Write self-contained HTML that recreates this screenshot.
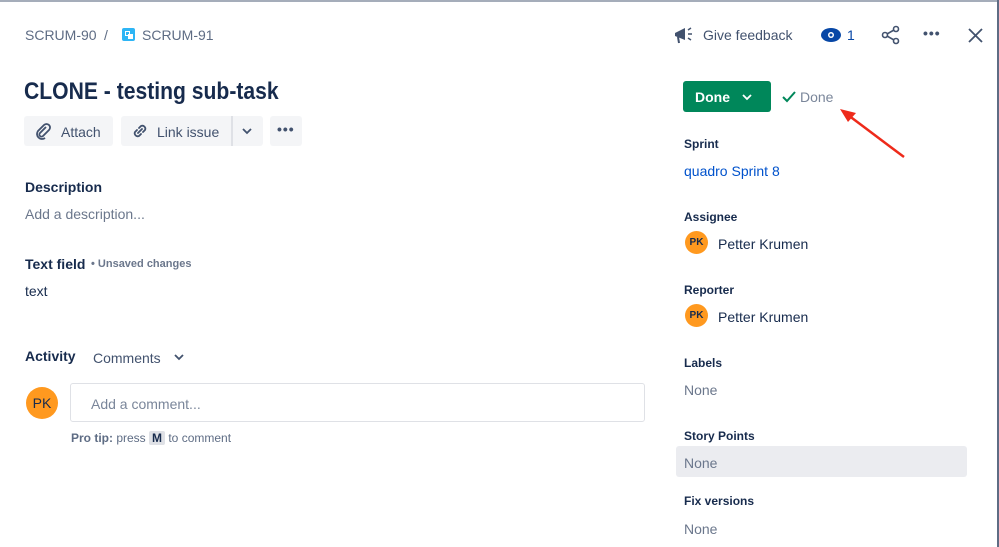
<!DOCTYPE html>
<html><head><meta charset="utf-8"><style>
*{box-sizing:border-box;margin:0;padding:0}
body{width:999px;height:547px;background:#fff;font-family:"Liberation Sans",sans-serif;color:#172b4d;position:relative;overflow:hidden}
.a{position:absolute;white-space:nowrap}
.lbl{font-size:12px;font-weight:bold;color:#172b4d}
.val{font-size:14px}
.none{font-size:14px;color:#6b778c}
.btn{position:absolute;background:#f4f5f7;border-radius:3px;height:30px;top:116px}
.av{position:absolute;border-radius:50%;background:#ff991f;color:#172b4d;font-weight:bold;text-align:center}
</style></head><body>
<div class="a" style="left:0;top:0;width:999px;height:2px;background:#a5adba"></div>
<div class="a" style="left:997px;top:0;width:2px;height:547px;background:#5e6c84"></div>

<div class="a" style="left:25px;top:27px;font-size:14px;color:#5e6c84">SCRUM-90</div>
<div class="a" style="left:104px;top:27px;font-size:14px;color:#5e6c84">/</div>
<div class="a" style="left:122px;top:28px;width:13px;height:13px;background:#2eb5f5;border-radius:2px"><div style="position:absolute;left:3px;top:3px;width:5px;height:5px;border:1px solid #fff"></div><div style="position:absolute;left:6px;top:6px;width:5px;height:5px;background:#fff"></div></div>
<div class="a" style="left:142px;top:27px;font-size:14px;color:#5e6c84">SCRUM-91</div>

<div class="a" style="left:24px;top:78px;font-size:24px;font-weight:bold;color:#172b4d;transform:scaleX(0.88);transform-origin:left top">CLONE - testing sub-task</div>

<div class="btn" style="left:24px;width:89px"></div>
<svg class="a" style="left:34px;top:122px" width="18" height="18" viewBox="0 0 18 18"><path d="M12 5 L6 11 a2 2 0 0 0 3 3 L15 8 a3.5 3.5 0 0 0 -5 -5 L4 9 a5 5 0 0 0 7 7" fill="none" stroke="#42526e" stroke-width="1.8"/></svg>
<div class="a" style="left:61px;top:124px;font-size:14px;color:#42526e">Attach</div>
<div class="btn" style="left:121px;width:142px"></div>
<div class="a" style="left:231px;top:116px;width:2px;height:30px;background:#dfe1e6"></div>
<svg class="a" style="left:131px;top:122px" width="18" height="18" viewBox="0 0 18 18"><path d="M8 6 L10 4 a3 3 0 0 1 4 4 L12 10 M10 12 L8 14 a3 3 0 0 1 -4 -4 L6 8 M7 11 L11 7" fill="none" stroke="#42526e" stroke-width="1.8" stroke-linecap="round"/></svg>
<div class="a" style="left:157px;top:124px;font-size:14px;color:#42526e">Link issue</div>
<svg class="a" style="left:242px;top:127px" width="10" height="8"><path d="M1 2 L5 6 L9 2" fill="none" stroke="#42526e" stroke-width="1.8"/></svg>
<div class="btn" style="left:270px;width:32px"></div>
<div class="a" style="left:277px;top:121px;font-size:14px;color:#42526e;letter-spacing:1px;font-weight:bold">•••</div>

<div class="a" style="left:25px;top:179px;font-size:14px;font-weight:bold">Description</div>
<div class="a" style="left:25px;top:206px;font-size:14px;color:#6b778c">Add a description...</div>
<div class="a" style="left:25px;top:256px;font-size:14px;font-weight:bold">Text field</div>
<div class="a" style="left:91px;top:258px;font-size:11px;font-weight:bold;color:#6b778c">• Unsaved changes</div>
<div class="a" style="left:25px;top:283px;font-size:14px">text</div>

<div class="a" style="left:25px;top:348px;font-size:14px;font-weight:bold">Activity</div>
<div class="a" style="left:93px;top:350px;font-size:14px;color:#42526e">Comments</div>
<svg class="a" style="left:174px;top:353px" width="10" height="8"><path d="M1 2 L5 6 L9 2" fill="none" stroke="#42526e" stroke-width="1.8"/></svg>
<div class="av" style="left:26px;top:387px;width:32px;height:32px;line-height:32px;font-size:14px;font-weight:normal">PK</div>
<div class="a" style="left:70px;top:383px;width:575px;height:39px;border:1px solid #dfe1e6;border-radius:3px"></div>
<div class="a" style="left:91px;top:396px;font-size:14px;color:#7a869a">Add a comment...</div>
<div class="a" style="left:71px;top:431px;font-size:12px;color:#5e6c84"><b>Pro tip:</b> press <span style="background:#dfe1e6;border-radius:2px;padding:0 3px;font-weight:bold;color:#172b4d">M</span> to comment</div>

<svg class="a" style="left:673px;top:25px" width="22" height="20" viewBox="0 0 22 20"><path d="M2 8 L12 3 L12 15 L2 11 Z" fill="#42526e"/><path d="M5 12 L6 18" stroke="#42526e" stroke-width="2"/><path d="M15 5 L18 3 M15 9 L19 9 M15 13 L18 15" stroke="#42526e" stroke-width="1.5"/></svg>
<div class="a" style="left:703px;top:27px;font-size:14px;color:#42526e">Give feedback</div>
<svg class="a" style="left:820px;top:27px" width="22" height="16" viewBox="0 0 22 16"><ellipse cx="11" cy="8" rx="10" ry="7" fill="#0747a6"/><circle cx="11" cy="8" r="3" fill="#fff"/><circle cx="11" cy="8" r="1.5" fill="#0747a6"/></svg>
<div class="a" style="left:847px;top:27px;font-size:14px;color:#0747a6">1</div>
<svg class="a" style="left:881px;top:25px" width="20" height="20" viewBox="0 0 20 20"><circle cx="15" cy="4" r="2.5" fill="none" stroke="#42526e" stroke-width="1.6"/><circle cx="4" cy="10" r="2.5" fill="none" stroke="#42526e" stroke-width="1.6"/><circle cx="15" cy="16" r="2.5" fill="none" stroke="#42526e" stroke-width="1.6"/><path d="M6 9 L13 5 M6 11 L13 15" stroke="#42526e" stroke-width="1.6"/></svg>
<div class="a" style="left:923px;top:25px;font-size:14px;color:#42526e;letter-spacing:1px;font-weight:bold">•••</div>
<svg class="a" style="left:968px;top:28px" width="15" height="15"><path d="M1 1 L14 14 M14 1 L1 14" stroke="#42526e" stroke-width="1.8"/></svg>

<div class="a" style="left:683px;top:81px;width:88px;height:31px;background:#00875a;border-radius:3px"></div>
<div class="a" style="left:695px;top:89px;font-size:14px;font-weight:bold;color:#fff">Done</div>
<svg class="a" style="left:742px;top:93px" width="10" height="8"><path d="M1 2 L5 6 L9 2" fill="none" stroke="#fff" stroke-width="1.8"/></svg>
<svg class="a" style="left:781px;top:90px" width="16" height="14"><path d="M2 7 L6 11 L14 2" fill="none" stroke="#00875a" stroke-width="2"/></svg>
<div class="a" style="left:800px;top:89px;font-size:14px;color:#7a869a">Done</div>
<svg class="a" style="left:836px;top:105px" width="72" height="56"><path d="M68 52 L12 10" stroke="#ee2a1a" stroke-width="2.5"/><path d="M4 4 L20 8 L12 17 Z" fill="#ee2a1a"/></svg>

<div class="a lbl" style="left:684px;top:137px">Sprint</div>
<div class="a val" style="left:684px;top:163px;color:#0052cc">quadro Sprint 8</div>
<div class="a lbl" style="left:684px;top:210px">Assignee</div>
<div class="av" style="left:685px;top:231px;width:23px;height:23px;line-height:23px;font-size:10px">PK</div>
<div class="a val" style="left:718px;top:236px">Petter Krumen</div>
<div class="a lbl" style="left:684px;top:283px">Reporter</div>
<div class="av" style="left:685px;top:304px;width:23px;height:23px;line-height:23px;font-size:10px">PK</div>
<div class="a val" style="left:718px;top:309px">Petter Krumen</div>
<div class="a lbl" style="left:684px;top:356px">Labels</div>
<div class="a none" style="left:684px;top:382px">None</div>
<div class="a lbl" style="left:684px;top:429px">Story Points</div>
<div class="a" style="left:676px;top:446px;width:291px;height:31px;background:#ebecf0;border-radius:3px"></div>
<div class="a none" style="left:684px;top:455px">None</div>
<div class="a lbl" style="left:684px;top:494px">Fix versions</div>
<div class="a none" style="left:684px;top:521px">None</div>
</body></html>
